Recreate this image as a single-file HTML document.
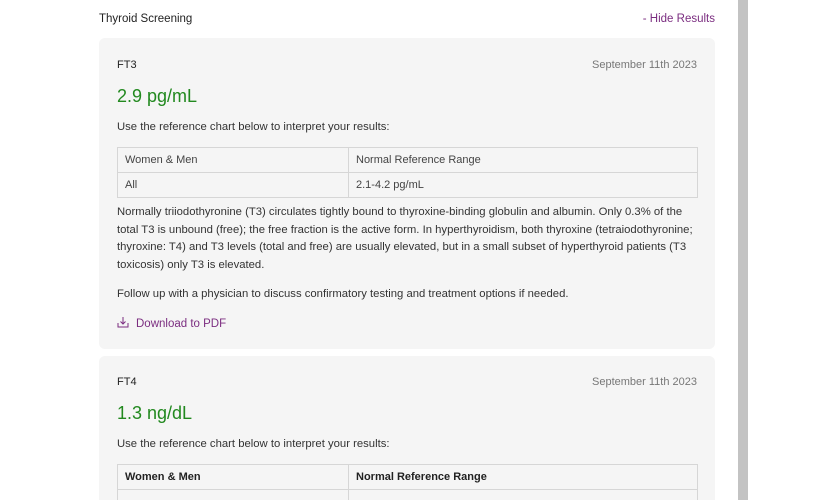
<!DOCTYPE html>
<html style="overflow:hidden;width:826px;height:500px"><head><style>
body{margin:0;width:826px;height:500px;overflow:hidden;background:#fff;font-family:"Liberation Sans",sans-serif;color:#333;position:relative}
.bar{position:absolute;left:738px;top:0;width:10px;height:500px;background:#c3c3c3}
.hdr{position:absolute;left:99px;top:13px;font-size:11.5px;color:#222}
.hide{position:absolute;right:111px;top:13px;font-size:11.5px;color:#7b2d80}
.card{position:absolute;left:99px;width:616px;background:#f5f5f5;border-radius:6px;overflow:hidden}
.t{position:absolute;left:18px;font-size:11px;color:#222}
.d{position:absolute;right:18px;font-size:11px;color:#777}
.v{position:absolute;left:18px;font-size:18px;color:#22891f}
.p{position:absolute;left:18px;width:582px;font-size:11.3px;line-height:17.6px;color:#333}
table{position:absolute;left:18px;width:581px;border-collapse:collapse;font-size:11px;color:#444}
td{border:1px solid #d6d6d6;height:24px;padding:0 7px}
.dl{position:absolute;left:18px;font-size:11.5px;color:#7b2d80}
</style></head><body>
<div class="bar"></div>
<div class="hdr">Thyroid Screening</div>
<div class="hide">- Hide Results</div>
<div class="card" style="top:38px;height:311px">
<div class="t" style="top:21px">FT3</div>
<div class="d" style="top:21px">September 11th 2023</div>
<div class="v" style="top:48px">2.9 pg/mL</div>
<div class="p" style="top:81px">Use the reference chart below to interpret your results:</div>
<table style="top:109px"><tr><td style="width:216px">Women &amp; Men</td><td>Normal Reference Range</td></tr><tr><td>All</td><td>2.1-4.2 pg/mL</td></tr></table>
<div class="p" style="top:166px">Normally triiodothyronine (T3) circulates tightly bound to thyroxine-binding globulin and albumin. Only 0.3% of the total T3 is unbound (free); the free fraction is the active form. In hyperthyroidism, both thyroxine (tetraiodothyronine; thyroxine: T4) and T3 levels (total and free) are usually elevated, but in a small subset of hyperthyroid patients (T3 toxicosis) only T3 is elevated.</div>
<div class="p" style="top:248px">Follow up with a physician to discuss confirmatory testing and treatment options if needed.</div>
<div class="dl" style="top:278px"><svg width="12" height="12" viewBox="0 0 12 12" style="vertical-align:-1px;margin-right:7px" fill="none" stroke="#7b2d80" stroke-width="1"><path d="M6 1v7M3.5 5.5L6 8l2.5-2.5M1 7v4h10V7"/></svg>Download to PDF</div>
</div>
<div class="card" style="top:356px;height:144px;border-radius:6px 6px 0 0">
<div class="t" style="top:20px">FT4</div>
<div class="d" style="top:20px">September 11th 2023</div>
<div class="v" style="top:47px">1.3 ng/dL</div>
<div class="p" style="top:80px">Use the reference chart below to interpret your results:</div>
<table style="top:108px;font-weight:bold;color:#222"><tr><td style="width:216px">Women &amp; Men</td><td>Normal Reference Range</td></tr><tr><td></td><td></td></tr></table>
</div>
</body></html>
